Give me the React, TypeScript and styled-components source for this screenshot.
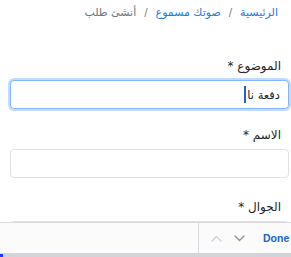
import React from "react";
import styled, { createGlobalStyle } from "styled-components";

const Global = createGlobalStyle`
  html, body { margin: 0; padding: 0; background: #ffffff; }
  body { font-family: "DejaVu Sans", "Noto Sans", sans-serif; overflow: hidden; }
  * { box-sizing: border-box; }
`;

const Page = styled.div`
  direction: rtl;
  width: 291px;
  height: 257px;
  position: relative;
  overflow: hidden;
  background: #fff;
`;

const Breadcrumb = styled.nav`
  display: flex;
  align-items: center;
  gap: 8px;
  padding: 4px 13px 0 0;
  height: 22px;
  font-size: 11px;
  line-height: 18px;
`;

const Crumb = styled.a<{ $active?: boolean }>`
  color: ${(p) => (p.$active ? "#6c757d" : "#1f7ad8")};
  text-decoration: none;
`;

const Sep = styled.span`
  color: #6c757d;
  font-size: 10px;
`;

const Form = styled.form`
  display: flex;
  flex-direction: column;
  padding: 0 2px 0 10px;
  margin-top: 35px;
`;

const Field = styled.div<{ $gap: number }>`
  display: flex;
  flex-direction: column;
  margin-bottom: ${(p) => p.$gap}px;
`;

const Label = styled.label`
  font-size: 12px;
  line-height: 18px;
  color: #212529;
  padding-right: 8px;
  margin-bottom: 5px;
`;

const InputBox = styled.div<{ $focus?: boolean }>`
  display: flex;
  align-items: center;
  height: 29px;
  padding: 0 8px;
  border-radius: 4px;
  border: 1px solid ${(p) => (p.$focus ? "#86b7fe" : "#dee2e6")};
  box-shadow: ${(p) => (p.$focus ? "0 0 0 2px rgba(13,110,253,0.25)" : "none")};
  font-size: 11.5px;
  color: #212529;
  background: #fff;
`;

const Caret = styled.span`
  display: inline-block;
  width: 2px;
  height: 17px;
  background: #2a5bd7;
  margin-right: 1px;
`;

const Accessory = styled.div`
  position: absolute;
  left: 0;
  right: 0;
  bottom: 0;
  direction: ltr;
  display: flex;
  flex-direction: column;
`;

const Bar = styled.div`
  height: 31px;
  background: #fbfbfb;
  border-top: 1px solid #d8d8dc;
  display: flex;
  align-items: stretch;
`;

const BarSpacer = styled.div`
  flex: 0 0 199px;
  border-right: 1px solid #d8d8dc;
`;

const BarControls = styled.div`
  flex: 1;
  display: flex;
  align-items: center;
  padding-left: 11px;
  gap: 11px;
`;

const Chevron = styled.button<{ $muted?: boolean }>`
  border: 0;
  background: none;
  padding: 0;
  width: 12px;
  height: 12px;
  display: flex;
  align-items: center;
  justify-content: center;
  color: ${(p) => (p.$muted ? "#cfcfd3" : "#8e8e93")};
`;

const Done = styled.button`
  border: 0;
  background: none;
  padding: 0;
  margin-left: 7px;
  font-family: "Liberation Sans", "DejaVu Sans", sans-serif;
  font-weight: 700;
  font-size: 10.5px;
  color: #1463d2;
  white-space: nowrap;
`;

const KeyboardEdge = styled.div`
  height: 4px;
  background: #d3d4da;
  position: relative;
`;

const Dot = styled.span`
  position: absolute;
  left: 0;
  bottom: 0;
  width: 3px;
  height: 3px;
  background: #1a3cff;
`;

const ChevronIcon = ({ up }: { up?: boolean }) => (
  <svg width="11" height="7" viewBox="0 0 11 7" fill="none">
    <path
      d={up ? "M1 6 L5.5 1.5 L10 6" : "M1 1 L5.5 5.5 L10 1"}
      stroke="currentColor"
      strokeWidth="1.3"
      strokeLinecap="round"
      strokeLinejoin="round"
    />
  </svg>
);

export default function App() {
  return (
    <>
      <Global />
      <Page>
        <Breadcrumb>
          <Crumb href="#">الرئيسية</Crumb>
          <Sep>/</Sep>
          <Crumb href="#">صوتك مسموع</Crumb>
          <Sep>/</Sep>
          <Crumb $active>أنشئ طلب</Crumb>
        </Breadcrumb>
        <Form>
          <Field $gap={17}>
            <Label>الموضوع *</Label>
            <InputBox $focus>
              <span>دفعة نا</span>
              <Caret />
            </InputBox>
          </Field>
          <Field $gap={20}>
            <Label>الاسم *</Label>
            <InputBox />
          </Field>
          <Field $gap={0}>
            <Label>الجوال *</Label>
            <InputBox />
          </Field>
        </Form>
        <Accessory>
          <Bar>
            <BarSpacer />
            <BarControls>
              <Chevron $muted>
                <ChevronIcon up />
              </Chevron>
              <Chevron>
                <ChevronIcon />
              </Chevron>
              <Done>Done</Done>
            </BarControls>
          </Bar>
          <KeyboardEdge>
            <Dot />
          </KeyboardEdge>
        </Accessory>
      </Page>
    </>
  );
}
